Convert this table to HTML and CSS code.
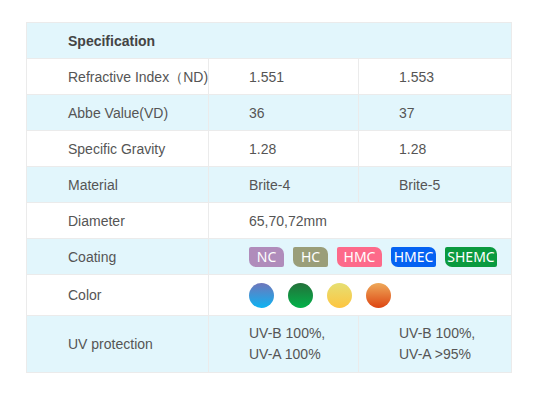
FILE: index.html
```html
<!DOCTYPE html>
<html>
<head>
<meta charset="utf-8">
<link rel="stylesheet" href="styles.css">
</head>
<body>
<div class="wrap">
<table class="spec">
  <colgroup><col class="w1"><col class="w2"><col class="w3"></colgroup>
  <tr class="blue"><th colspan="3">Specification</th></tr>
  <tr><td>Refractive Index（ND)</td><td class="v">1.551</td><td class="v">1.553</td></tr>
  <tr class="blue"><td>Abbe Value(VD)</td><td class="v">36</td><td class="v">37</td></tr>
  <tr><td>Specific Gravity</td><td class="v">1.28</td><td class="v">1.28</td></tr>
  <tr class="blue"><td>Material</td><td class="v">Brite-4</td><td class="v">Brite-5</td></tr>
  <tr><td>Diameter</td><td colspan="2" class="v">65,70,72mm</td></tr>
  <tr class="blue"><td>Coating</td><td colspan="2" class="v">
    <div class="badges">
      <span class="badge nc">NC</span>
      <span class="badge hc">HC</span>
      <span class="badge hmc">HMC</span>
      <span class="badge hmec">HMEC</span>
      <span class="badge shemc">SHEMC</span>
    </div>
  </td></tr>
  <tr class="color-row"><td>Color</td><td colspan="2" class="v">
    <div class="dots">
      <span class="dot d1"></span>
      <span class="dot d2"></span>
      <span class="dot d3"></span>
      <span class="dot d4"></span>
    </div>
  </td></tr>
  <tr class="blue uv"><td>UV protection</td><td class="v">UV-B 100%,<br>UV-A 100%</td><td class="v">UV-B 100%,<br>UV-A &gt;95%</td></tr>
</table>
</div>
</body>
</html>
```

FILE: styles.css
```css
html, body {
  margin: 0;
  padding: 0;
  background: #ffffff;
}
.wrap {
  padding: 22px 0 0 26px;
}
.spec {
  border-collapse: collapse;
  width: 485px;
  table-layout: fixed;
  font-family: "Liberation Sans", Arial, sans-serif;
  font-size: 14px;
  color: #555555;
}
.w1 { width: 182px; }
.w2 { width: 150px; }
.w3 { width: 153px; }
.spec th, .spec td {
  border: 1px solid #ebebeb;
  padding: 0 0 0 41px;
  height: 35px;
  text-align: left;
  vertical-align: middle;
  line-height: 20px;
  white-space: nowrap;
}
.spec td.v { padding-left: 40px; }
.spec th {
  font-weight: bold;
  color: #444444;
}
.spec tr.blue { background: #e2f6fc; }
.spec tr.color-row td { height: 40px; }
.spec tr.uv td { height: 56px; line-height: 21px; }
.badges {
  display: flex;
  gap: 9px;
  align-items: center;
}
.badge {
  display: inline-block;
  height: 20px;
  line-height: 20px;
  color: #ffffff;
  text-align: center;
  font-family: "Noto Sans", "Liberation Sans", sans-serif;
  font-size: 14px;
  border-radius: 2px 7px 2px 7px;
}
.nc { width: 35px; background: #b08cbb; }
.hc { width: 35px; background: #9a9e79; }
.hmc { width: 45px; background: #fd6a8a; }
.hmec { width: 45px; background: #0462f2; }
.shemc { width: 52px; background: #0a9a3f; }
.dots {
  display: flex;
  gap: 14px;
  align-items: center;
}
.dot {
  width: 25px;
  height: 25px;
  border-radius: 50%;
}
.d1 { background: linear-gradient(#6f76bb, #0db3f2); }
.d2 { background: linear-gradient(#24713a, #02b24a); }
.d3 { background: linear-gradient(#e6df73, #fdc540); }
.d4 { background: linear-gradient(#eea95a, #dd4512); }
```
